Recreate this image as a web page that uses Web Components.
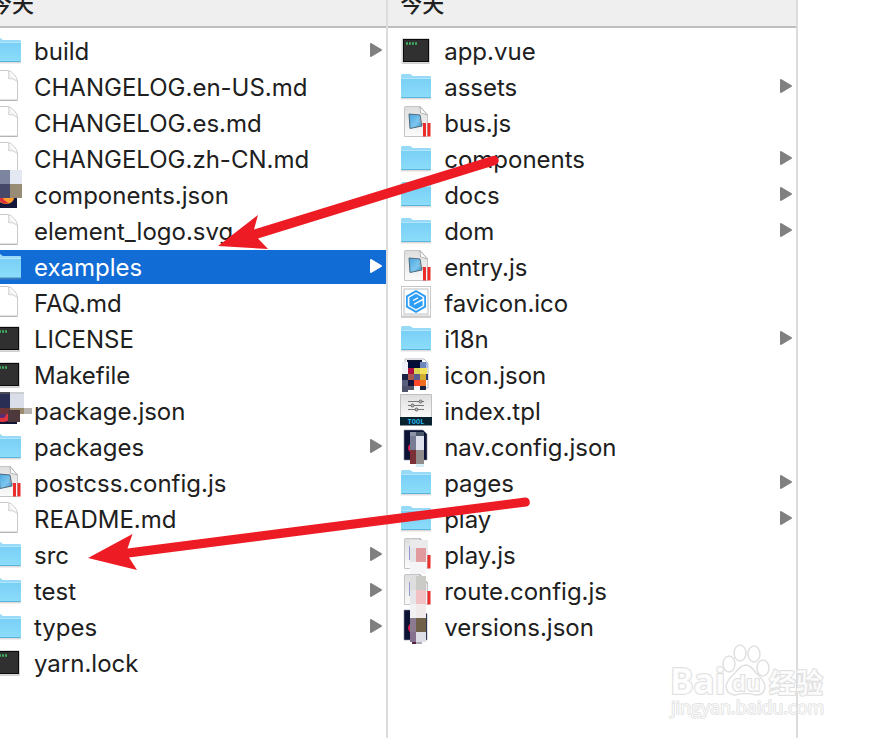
<!DOCTYPE html>
<html lang="zh-CN">
<head>
<meta charset="utf-8">
<title>element</title>
<style>
  body {
    margin: 0;
    min-height: 100vh;
    overflow: hidden;
    background: #fff;
    color: #202020;
    font-family: Inter, "Noto Sans CJK SC", sans-serif;
  }
</style>
</head>
<body>
<finder-window>
  <finder-column label="今天">
    <file-row kind="folder" opens>build</file-row>
    <file-row kind="doc">CHANGELOG.en-US.md</file-row>
    <file-row kind="doc">CHANGELOG.es.md</file-row>
    <file-row kind="doc">CHANGELOG.zh-CN.md</file-row>
    <file-row kind="json-a">components.json</file-row>
    <file-row kind="doc">element_logo.svg</file-row>
    <file-row kind="folder" opens selected>examples</file-row>
    <file-row kind="doc">FAQ.md</file-row>
    <file-row kind="exec">LICENSE</file-row>
    <file-row kind="exec">Makefile</file-row>
    <file-row kind="json-b">package.json</file-row>
    <file-row kind="folder" opens>packages</file-row>
    <file-row kind="js">postcss.config.js</file-row>
    <file-row kind="doc">README.md</file-row>
    <file-row kind="folder" opens>src</file-row>
    <file-row kind="folder" opens>test</file-row>
    <file-row kind="folder" opens>types</file-row>
    <file-row kind="exec">yarn.lock</file-row>
  </finder-column>
  <finder-column label="今天">
    <file-row kind="exec">app.vue</file-row>
    <file-row kind="folder" opens>assets</file-row>
    <file-row kind="js">bus.js</file-row>
    <file-row kind="folder" opens>components</file-row>
    <file-row kind="folder" opens>docs</file-row>
    <file-row kind="folder" opens>dom</file-row>
    <file-row kind="js">entry.js</file-row>
    <file-row kind="ico">favicon.ico</file-row>
    <file-row kind="folder" opens>i18n</file-row>
    <file-row kind="json-c">icon.json</file-row>
    <file-row kind="tool">index.tpl</file-row>
    <file-row kind="json-d">nav.config.json</file-row>
    <file-row kind="folder" opens>pages</file-row>
    <file-row kind="folder" opens>play</file-row>
    <file-row kind="js-a">play.js</file-row>
    <file-row kind="js-b">route.config.js</file-row>
    <file-row kind="json-e">versions.json</file-row>
  </finder-column>
  <red-arrows slot="overlay"></red-arrows>
  <site-mark slot="overlay"></site-mark>
</finder-window>

<script>
// [x, y, w, h, colour] blocks for the pixelated icons
const blocks = (list) => list.map(([x, y, w, h, c]) =>
  `<rect x="${x}" y="${y}" width="${w}" height="${h}" fill="${c}"/>`).join('');

const darkDoc = `
  <path d="M4 0H23L27 4V30H4Z" fill="#0b1233" stroke="#8a8da3" stroke-width=".6"/>
  <circle cx="13" cy="18" r="5" fill="#d81f52"/>`;

const jsDoc = `
  <path d="M5 .5H20L27.500 9V30.500H4.500V1Z" fill="url(#paper)" stroke="#c4c4c4"/>
  <path d="M20 .5L20.500 7L27.500 9Z" fill="#fafafa" stroke="#a5a5a5" stroke-width=".8"/>`;
const redBars = '<path d="M23 17H26V30.500H23ZM27.500 17H30.500V30.500H27.500Z" fill="#ec2b2b"/>';

const ICONS = {
  folder: `
    <path d="M1 6Q1 4 2.500 4H10Q11 4 12 5.500L13 6H30Q31 6 31 7V27.500Q31 28.500 30 28.500H2Q1 28.500 1 27.500Z" fill="#9a9a9a" opacity=".35" transform="translate(0 1)"/>
    <path d="M1 6Q1 4 2.500 4H10Q11 4 12 5.500L13 6H30Q31 6 31 7V27H1Z" fill="#97daf8"/>
    <path d="M1 8.500H31V27Q31 28 30 28H2Q1 28 1 27Z" fill="url(#blue)"/>
    <path d="M1 8.500H31" stroke="#b1e6fd"/>
    <path d="M1.500 27.500H30.500" stroke="#5db4da"/>`,
  doc: `
    <path d="M3.500 .5H18Q21 1 24.500 5Q27.500 8 27.500 12V30H3.500Z" fill="#fff" stroke="#c9c9c9"/>
    <path d="M3.500 30.500H27.500" stroke="#b4b4b4"/>
    <path d="M18 .5Q19.500 2 18.500 8.500Q24 8 27.300 11.500" fill="#f4f4f4" stroke="#cfcfcf"/>`,
  exec: `
    <rect x="1.500" y="5" width="28.500" height="25" rx="1" fill="#777" opacity=".35"/>
    <rect x="2" y="4" width="27.500" height="25" fill="#d7dadb"/>
    <rect x="3.500" y="5.500" width="25" height="22" fill="#303030" stroke="#090909"/>
    <path d="M6 9.500H17" stroke="#3fae5e" stroke-width="2.500" stroke-dasharray="2 1"/>`,
  js: `${jsDoc}
    <path d="M9 8L20 9L22 20L10 22.500Z" fill="url(#screen)" stroke="#50697d"/>
    <path d="M19 13L25 21" stroke="#a29c8a" stroke-width="1"/>
    ${redBars}`,
  ico: `
    <rect x="1" y="1" width="30" height="31" fill="#aaa" opacity=".55"/>
    <rect x="1.500" y=".5" width="29" height="29.500" fill="#fff" stroke="#c7c7c7"/>
    <rect x="4" y="3" width="24" height="25" fill="#fff" stroke="#b9c0c5"/>
    <path d="M16 4L26 9.800V21.200L16 27L6 21.200V9.800Z" fill="#2e9df6"/>
    <path d="M16 6.300L24.200 11V20L16 24.700L7.800 20V11Z" fill="#fff"/>
    <path d="M16 7.800L22.600 11.600V12.800L14 17.500V19L22.600 14.500V19.400L16 23.200L9.400 19.400V11.600Z" fill="#2e9df6"/>
    <path d="M13 14.500L18 11.800" stroke="#fff" stroke-width="1.400"/>`,
  tool: `
    <path d="M.5 .5H31.500V24H.5Z" fill="url(#paper)" stroke="#b4b4b4" stroke-width=".8"/>
    <path d="M8 7.500H24M8 11.500H24M8 15.500H24" stroke="#777"/>
    <circle cx="20.500" cy="7.500" r="1.500" fill="#bbb" stroke="#666"/>
    <circle cx="12.500" cy="11.500" r="1.500" fill="#bbb" stroke="#666"/>
    <circle cx="16.500" cy="15.500" r="1.500" fill="#bbb" stroke="#666"/>
    <rect y="23" width="32" height="8.500" fill="#08222f"/>
    <text x="16" y="30" text-anchor="middle" font-family="Liberation Mono" font-size="7" font-weight="700" fill="#27b9ec">TOOL</text>`,
  'json-a': `
    <path d="M0 10H27V30H0Z" fill="#14163a"/>
    <ellipse cx="16" cy="20" rx="8" ry="6" fill="#ff9d2e"/>
    <path d="M8 20Q12 28 19 25Q14 23 13 20Z" fill="#dc2f3d"/>
    ${blocks([[10, -8, 10, 14, '#7d849f'], [20, -8, 12, 14, '#e4e8f2'], [10, 6, 10, 14, '#454868'], [20, 6, 12, 14, '#988c77']])}`,
  'json-b': `
    <path d="M0 4H27V30H0Z" fill="#111536"/>
    <ellipse cx="13" cy="23" rx="8" ry="5" fill="#e03540"/>
    <circle cx="12" cy="20" r="4" fill="#5b2b72"/>
    ${blocks([[10, -2, 10, 2, '#4a4c55'], [20, -2, 14, 2, '#cccfd2'], [10, 0, 10, 14, '#292e55'], [20, 0, 14, 14, '#dadee8'],
      [10, 14, 10, 6, '#6c3435'], [20, 14, 14, 6, '#9a8b6d'], [34, 14, 8, 6, '#b9b3b0'], [18, 16, 12, 12, '#4d393b']])}`,
  'json-c': `
    <path d="M7 1H24L28 5V30H5V1Z" fill="#fff" stroke="#8a8da3" stroke-width=".6"/>
    ${blocks([[7, 2, 15, 3, '#0a1130'], [2, 4, 6, 12, '#eff1f4'], [8, 4, 12, 6, '#020c38'], [20, 4, 6, 6, '#6f86bb'], [26, 4, 2, 6, '#a9bde2'],
      [8, 10, 6, 6, '#b0103d'], [14, 10, 6, 6, '#dad553'], [20, 10, 7, 6, '#f2e35a'],
      [2, 16, 6, 6, '#1b2145'], [8, 16, 6, 6, '#a85850'], [14, 16, 6, 6, '#5b5c90'], [20, 16, 6, 6, '#d0ad32'], [26, 16, 2, 6, '#2e3c75'],
      [2, 22, 6, 6, '#5a5f7c'], [8, 22, 6, 6, '#15153b'], [14, 22, 6, 6, '#ff4628'], [20, 22, 6, 6, '#ef6d20'],
      [2, 28, 12, 6, '#50526a'], [14, 28, 6, 6, '#f3f3f6'], [20, 28, 6, 6, '#1a2040'], [8, 32, 18, 4, '#fff']])}`,
  'json-d': `${darkDoc}
    ${blocks([[10, 2, 6, 4, '#8d93a6'], [16, 2, 8, 4, '#4c566a'], [10, 6, 6, 14, '#777b93'], [16, 6, 8, 14, '#dfe2ed'],
      [10, 20, 6, 14, '#7a3035'], [16, 20, 8, 14, '#908c8c'], [16, 34, 8, 3, '#d4eef6']])}`,
  'js-a': `${jsDoc}${redBars}
    <path d="M9 8H12V22H9Z" fill="#8f9bd2"/>
    ${blocks([[10, 2, 18, 8, '#eaeaec'], [10, 10, 6, 14, '#e5e5e7'], [16, 10, 10, 14, '#e19a9d'], [26, 10, 2, 7, '#e8e8ea'],
      [10, 24, 16, 12, '#f5f4f6'], [26, 17, 1, 14, '#f0f0f0']])}`,
  'js-b': `${jsDoc}${redBars}
    <path d="M9 8H12V22H9Z" fill="#8f9bd2"/>
    ${blocks([[10, 2, 6, 14, '#dededf'], [16, 2, 10, 14, '#cacac6'], [10, 16, 6, 14, '#e5e5ea'], [16, 16, 10, 14, '#f2c1c4'],
      [10, 30, 16, 8, '#f1edee']])}`,
  'json-e': `${darkDoc}
    ${blocks([[10, -6, 6, 14, '#f2f2f4'], [16, -6, 10, 14, '#f0eaea'], [10, 8, 6, 14, '#8c7a90'], [16, 8, 10, 14, '#70604a'],
      [10, 22, 6, 10, '#85708f'], [16, 22, 10, 10, '#dedee6'], [12, 32, 4, 2, '#502545'], [16, 32, 6, 2, '#aaaab4']])}`
};

const GRADIENTS = `
  <defs>
    <linearGradient id="blue" x2="0" y2="1"><stop stop-color="#78cff5"/><stop offset="1" stop-color="#8dddfb"/></linearGradient>
    <linearGradient id="paper" x2="0" y2="1"><stop stop-color="#dedede"/><stop offset="1" stop-color="#fbfbfb"/></linearGradient>
    <linearGradient id="screen" x2="1" y2="1"><stop stop-color="#4aa4dc"/><stop offset=".6" stop-color="#7cc7ef"/><stop offset="1" stop-color="#3c86c0"/></linearGradient>
  </defs>`;

class FinderWindow extends HTMLElement {
  constructor() {
    super();
    this.attachShadow({ mode: 'open' }).innerHTML = `
      <style>
        :host {
          display: block;
          position: relative;
          min-height: 100vh;
          overflow: hidden;
        }

        /* scrolled sideways, so the first column starts outside the window */
        .columns {
          display: flex;
          min-height: 100vh;
          margin-left: -22px;
        }

        .rest {
          flex: 76 1 0;
        }
      </style>
      <main class="columns"><slot></slot><div class="rest"></div></main>
      <slot name="overlay"></slot>
    `;
  }
}

class FinderColumn extends HTMLElement {
  connectedCallback() {
    this.attachShadow({ mode: 'open' }).innerHTML = `
      <style>
        :host {
          display: block;
          box-sizing: border-box;
          flex: 410 1 0;
          border-right: 2px solid #dcdcdc;
        }

        header {
          display: flex;
          align-items: center;
          height: 44px;
          margin-top: -18px;
          padding-left: 12px;
          border-bottom: 2px solid #bdbdbd;
          background: #efefef;
          font-size: 22px;
          font-weight: 500;
          line-height: 32px;
        }

        .list {
          display: flex;
          flex-direction: column;
          gap: 2px;
          padding-top: 6px;
        }
      </style>
      <header>${this.getAttribute('label')}</header>
      <div class="list" role="listbox" aria-label="${this.getAttribute('label')}"><slot></slot></div>
    `;
  }
}

class FileRow extends HTMLElement {
  connectedCallback() {
    this.setAttribute('role', 'option');
    this.setAttribute('aria-selected', this.hasAttribute('selected'));
    const arrow = `
      <svg class="arrow" viewBox="0 0 12 14" aria-hidden="true">
        <path d="M1 1V13L11 7Z" fill="currentColor" stroke="currentColor" stroke-width="2" stroke-linejoin="round"/>
      </svg>`;
    this.attachShadow({ mode: 'open' }).innerHTML = `
      <style>
        :host {
          display: flex;
          align-items: center;
          gap: 12px;
          height: 34px;
          padding: 0 4px 0 12px;
          font-size: 24px;
          line-height: 32px;
          white-space: nowrap;
          cursor: default;
        }

        :host([selected]) {
          background: #116cd6;
          color: #fff;
        }

        .icon {
          flex: none;
          width: 32px;
          height: 34px;
          overflow: visible;
        }

        .name {
          flex: 1;
          padding-top: 2px;
        }

        .arrow {
          flex: none;
          width: 12px;
          height: 14px;
          margin-bottom: 2px;
          color: #808080;
        }

        :host([selected]) .arrow {
          color: #fff;
        }
      </style>
      <svg class="icon" viewBox="0 0 32 34" aria-hidden="true">${GRADIENTS}${ICONS[this.getAttribute('kind')]}</svg>
      <span class="name"><slot></slot></span>
      ${this.hasAttribute('opens') ? arrow : ''}
    `;
  }
}

class RedArrows extends HTMLElement {
  constructor() {
    super();
    this.attachShadow({ mode: 'open' }).innerHTML = `
      <style>
        :host {
          position: absolute;
          top: 0;
          left: 0;
          pointer-events: none;
        }

        svg {
          display: block;
        }
      </style>
      <svg width="540" height="580" fill="#ed1c24" aria-hidden="true">
        <path d="M218 246L258 215L254 229.500L492.500 156A4.600 4.600 0 0 1 495.500 165L258 238.500L268 249Z"/>
        <path d="M88 558L132.500 534L127.500 548.500L525 497.500A4.600 4.600 0 0 1 526.500 506.500L129 557.500L137 570Z"/>
      </svg>
    `;
  }
}

class SiteMark extends HTMLElement {
  constructor() {
    super();
    this.attachShadow({ mode: 'open' }).innerHTML = `
      <style>
        :host {
          position: absolute;
          right: 44px;
          bottom: 16px;
          pointer-events: none;
        }

        svg {
          display: block;
        }

        text {
          font-family: "Open Sans", "Noto Sans CJK SC", sans-serif;
          paint-order: stroke;
        }
      </style>
      <svg width="164" height="84" fill="#fff" fill-opacity=".8" stroke="#e0e0e0" stroke-width="2" stroke-linejoin="round">
        <text x="4" y="56" font-size="35" font-weight="700" font-family="Liberation Sans">Bai</text>
        <g stroke-width="1.500">
          <ellipse cx="63" cy="26" rx="6" ry="8"/>
          <ellipse cx="74" cy="15" rx="6" ry="8"/>
          <ellipse cx="88" cy="16" rx="6" ry="8"/>
          <ellipse cx="97" cy="30" rx="6" ry="8"/>
          <path d="M79 27Q85 27 90 35Q98 42 99 48Q99 57 90 57Q79 54 69 57Q60 56 60 48Q61 42 69 35Q74 28 79 27Z"/>
        </g>
        <text x="66" y="53" font-size="22" font-weight="700">du</text>
        <text x="103" y="55" font-size="27" font-weight="700">经验</text>
        <text x="5" y="76" font-size="18" stroke-width="1.500">jingyan.baidu.com</text>
      </svg>
    `;
  }
}

customElements.define('finder-window', FinderWindow);
customElements.define('finder-column', FinderColumn);
customElements.define('file-row', FileRow);
customElements.define('red-arrows', RedArrows);
customElements.define('site-mark', SiteMark);
</script>
</body>
</html>
